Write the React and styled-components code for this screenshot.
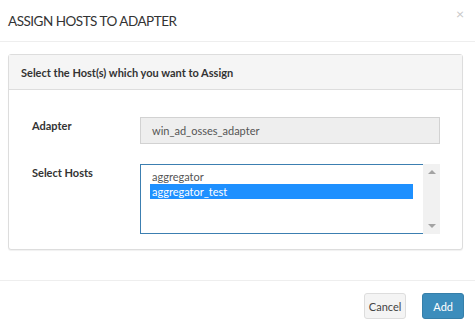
import React from 'react';
import styled, { createGlobalStyle } from 'styled-components';

const GlobalStyle = createGlobalStyle`
  html, body {
    margin: 0;
    padding: 0;
    background: #fff;
  }
  body {
    font-family: Lato, 'Liberation Sans', sans-serif;
    color: #333;
  }
`;

const Modal = styled.div`
  width: 475px;
  height: 329px;
  background: #fff;
  display: flex;
  flex-direction: column;
`;

const Header = styled.div`
  height: 42px;
  box-sizing: border-box;
  border-bottom: 1px solid #eeeeee;
  display: flex;
  align-items: center;
  justify-content: space-between;
  padding: 0 11px 0 8px;
`;

const Title = styled.h4`
  margin: 0;
  font-size: 13.5px;
  font-weight: 400;
  letter-spacing: -0.5px;
  color: #333;
`;

const Close = styled.span`
  font-size: 14px;
  color: #c8c8c8;
  line-height: 1;
  margin-top: -13px;
`;

const Body = styled.div`
  padding: 12px 12px 0 8px;
  height: 238px;
  box-sizing: border-box;
`;

const Panel = styled.div`
  border: 1px solid #dddddd;
  border-radius: 3px;
  box-shadow: 0 1px 1px rgba(0, 0, 0, 0.06);
  background: #fff;
`;

const PanelHeading = styled.div`
  height: 35px;
  box-sizing: border-box;
  background: #f5f5f5;
  border-bottom: 1px solid #dddddd;
  display: flex;
  align-items: center;
  padding: 0 12px;
  font-size: 11px;
  font-weight: 700;
  color: #333;
`;

const PanelBody = styled.div`
  padding: 27px 22px 15px 23px;
  display: flex;
  flex-direction: column;
  gap: 20px;
`;

const Row = styled.div`
  display: flex;
  align-items: flex-start;
`;

const Label = styled.label`
  width: 108px;
  flex-shrink: 0;
  font-size: 11px;
  font-weight: 700;
  color: #333;
  padding-top: ${(p) => p.$top || 0}px;
`;

const Input = styled.div`
  flex: 1;
  height: 27px;
  box-sizing: border-box;
  background: #eeeeee;
  border: 1px solid #d2d2d2;
  display: flex;
  align-items: center;
  padding: 0 11px;
  font-size: 11px;
  color: #555;
`;

const ListBox = styled.div`
  flex: 1;
  height: 70px;
  box-sizing: border-box;
  border: 1px solid #3c7fb1;
  display: flex;
`;

const Options = styled.div`
  flex: 1;
  padding: 4px 10px 0 9px;
`;

const Option = styled.div`
  height: 15px;
  line-height: 15px;
  font-size: 11px;
  padding-left: 2px;
  color: ${(p) => (p.$selected ? '#fff' : '#555')};
  background: ${(p) => (p.$selected ? '#1e90ff' : 'transparent')};
`;

const Scrollbar = styled.div`
  width: 17px;
  margin: -1px -1px -1px 0;
  background: #f1f1f1;
  display: flex;
  flex-direction: column;
  justify-content: space-between;
  align-items: center;
  padding: 6px 0;
  box-sizing: border-box;
`;

const Arrow = styled.div`
  width: 0;
  height: 0;
  border-left: 4px solid transparent;
  border-right: 4px solid transparent;
  ${(p) =>
    p.$up
      ? 'border-bottom: 4px solid #a3a3a3;'
      : 'border-top: 4px solid #a3a3a3;'}
`;

const Footer = styled.div`
  flex: 1;
  border-top: 1px solid #eeeeee;
  display: flex;
  justify-content: flex-end;
  align-items: flex-start;
  gap: 16px;
  padding: 12px 11px 0 0;
`;

const Button = styled.button`
  height: 26px;
  box-sizing: border-box;
  border-radius: 3px;
  font-family: inherit;
  font-size: 11px;
  padding: 0 ${(p) => (p.$primary ? 10 : 4)}px;
  cursor: pointer;
  background: ${(p) => (p.$primary ? '#3c8dbc' : '#f4f4f4')};
  color: ${(p) => (p.$primary ? '#fff' : '#444')};
  border: 1px solid ${(p) => (p.$primary ? '#367fa9' : '#dddddd')};
`;

export default function App() {
  return (
    <>
      <GlobalStyle />
      <Modal>
        <Header>
          <Title>ASSIGN HOSTS TO ADAPTER</Title>
          <Close>×</Close>
        </Header>
        <Body>
          <Panel>
            <PanelHeading>Select the Host(s) which you want to Assign</PanelHeading>
            <PanelBody>
              <Row>
                <Label $top={2}>Adapter</Label>
                <Input>win_ad_osses_adapter</Input>
              </Row>
              <Row>
                <Label $top={2}>Select Hosts</Label>
                <ListBox>
                  <Options>
                    <Option>aggregator</Option>
                    <Option $selected>aggregator_test</Option>
                  </Options>
                  <Scrollbar>
                    <Arrow $up />
                    <Arrow />
                  </Scrollbar>
                </ListBox>
              </Row>
            </PanelBody>
          </Panel>
        </Body>
        <Footer>
          <Button>Cancel</Button>
          <Button $primary>Add</Button>
        </Footer>
      </Modal>
    </>
  );
}
